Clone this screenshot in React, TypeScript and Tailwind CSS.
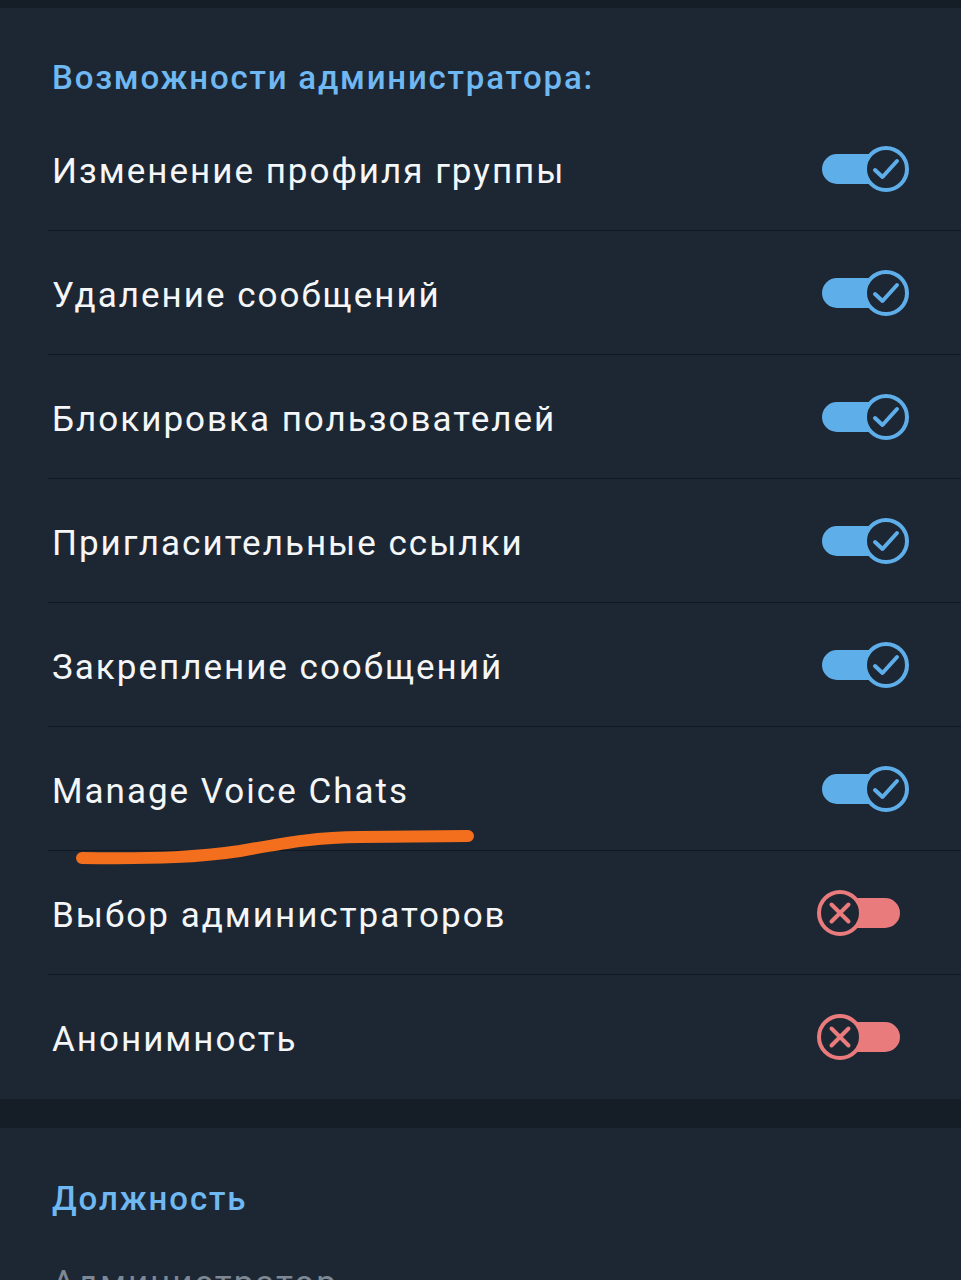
import React from "react";

const rows: { label: string; on: boolean }[] = [
  { label: "Изменение профиля группы", on: true },
  { label: "Удаление сообщений", on: true },
  { label: "Блокировка пользователей", on: true },
  { label: "Пригласительные ссылки", on: true },
  { label: "Закрепление сообщений", on: true },
  { label: "Manage Voice Chats", on: true },
  { label: "Выбор администраторов", on: false },
  { label: "Анонимность", on: false },
];

const Toggle = ({ on }: { on: boolean }) => {
  const color = on ? "#5eaeea" : "#ea7b7d";
  return (
    <div
      className={`relative w-[78px] h-[30px] rounded-full ${on ? "bg-[#5eaeea]" : "bg-[#ea7b7d]"}`}
    >
      <div
        className={`absolute top-[-8px] w-[46px] h-[46px] rounded-full bg-[#1d2733] border-[4px] flex items-center justify-center ${
          on ? "left-[41px] border-[#5eaeea]" : "left-[-5px] border-[#ea7b7d]"
        }`}
      >
        <svg width="38" height="38" viewBox="0 0 38 38" fill="none">
          {on ? (
            <path d="M8 20 L15.5 27 L30 11" stroke={color} strokeWidth="4" strokeLinecap="round" strokeLinejoin="round" />
          ) : (
            <path d="M10.5 10.5 L27.5 27.5 M27.5 10.5 L10.5 27.5" stroke={color} strokeWidth="4" strokeLinecap="round" />
          )}
        </svg>
      </div>
    </div>
  );
};

export default function App() {
  return (
    <div className="w-[961px] h-[1280px] overflow-hidden bg-[#151d26] font-['Roboto',sans-serif]">
      <div className="h-[8px]" />
      <div className="bg-[#1d2733]">
        <div className="pl-[52px] pt-[51px] h-[99px]">
          <h3 className="text-[33px] leading-[38px] font-medium text-[#6fb8f2] tracking-[1.8px]">
            Возможности администратора:
          </h3>
        </div>
        <div className="relative">
          {rows.map((r, i) => (
            <div key={r.label} className="pl-[48px]">
              <div
                className={`h-[124px] flex items-center justify-between pr-[61px] ${
                  i < rows.length - 1 ? "border-b border-[#111821]" : ""
                }`}
              >
                <span className="pl-[4px] pt-[6px] text-[35px] leading-[40px] text-[#f4f6f8] tracking-[2px]">
                  {r.label}
                </span>
                <Toggle on={r.on} />
              </div>
            </div>
          ))}
          <svg
            className="absolute left-0 top-[700px] pointer-events-none"
            width="500"
            height="60"
            viewBox="0 0 500 60"
            fill="none"
          >
            <path
              d="M82 51 C160 52 200 50 240 44 C290 35 320 30 360 30 L468 29"
              stroke="#f36f1d"
              strokeWidth="12"
              strokeLinecap="round"
            />
          </svg>
        </div>
      </div>
      <div className="h-[29px]" />
      <div className="bg-[#1d2733] h-[200px]">
        <div className="pl-[52px] pt-[52px]">
          <h3 className="text-[33px] leading-[38px] font-medium text-[#6fb8f2] tracking-[1.9px]">Должность</h3>
          <p className="mt-[46px] text-[35px] leading-[40px] text-[#7d8894] tracking-[2px]">Администратор</p>
        </div>
      </div>
    </div>
  );
}
